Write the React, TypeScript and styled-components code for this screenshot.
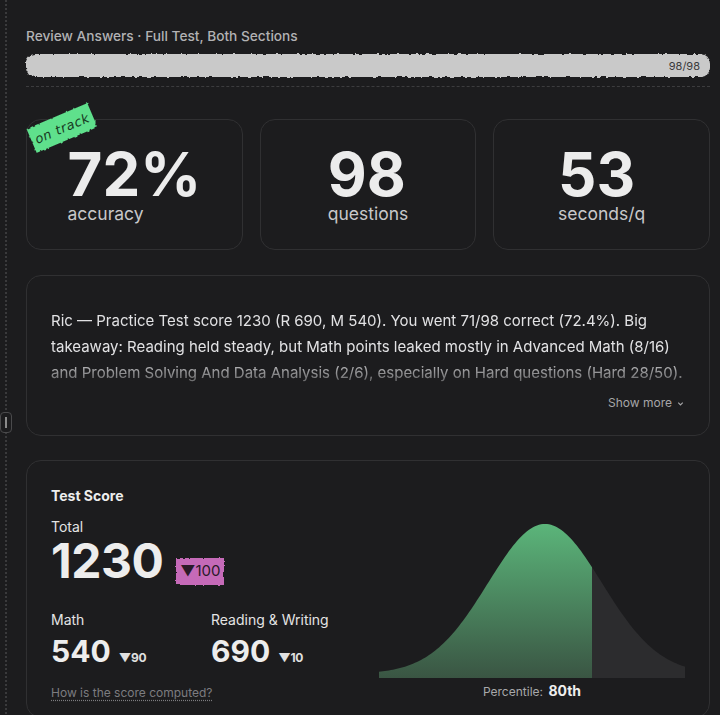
import React, { useMemo } from "react";
import styled, { createGlobalStyle } from "styled-components";

const GlobalStyle = createGlobalStyle`
  html, body {
    margin: 0;
    padding: 0;
    background: #1c1c1e;
    font-family: Inter, "Noto Sans", sans-serif;
    color: #e6e6e6;
  }
`;

const Page = styled.div`
  display: flex;
  min-height: 715px;
  overflow: hidden;
`;

const Rail = styled.div`
  position: relative;
  width: 13px;
  flex-shrink: 0;
  &::before {
    content: "";
    position: absolute;
    top: 0;
    bottom: 0;
    left: 5px;
    border-left: 2px dotted #3a3a3c;
  }
`;

const Handle = styled.div`
  position: absolute;
  left: 0;
  top: 412px;
  width: 10px;
  height: 19px;
  border: 1px solid #4a4a4c;
  border-radius: 4px;
  background: #1c1c1e;
  display: flex;
  align-items: center;
  justify-content: center;
  &::after {
    content: "";
    width: 2px;
    height: 11px;
    background: #8a8a8a;
  }
`;

const Main = styled.main`
  flex: 1;
  padding: 27px 10px 0 13px;
  display: flex;
  flex-direction: column;
`;

const Heading = styled.div`
  font-size: 13.7px;
  line-height: 18px;
  font-weight: 500;
  color: #b2b2b4;
`;

const Progress = styled.div`
  position: relative;
  margin-top: 9px;
  height: 23px;
  display: flex;
  align-items: center;
  justify-content: flex-end;
  padding-right: 10px;
  &::before {
    content: "";
    position: absolute;
    inset: 0;
    background: #c9c9c9;
    border-radius: 9px;
    filter: url(#rough);
  }
`;

const ProgressText = styled.span`
  position: relative;
  font-size: 11px;
  color: #3a3a3c;
`;

const Divider = styled.hr`
  margin: 9px 0 0;
  border: 0;
  border-top: 1px dashed #3c3c3e;
`;

const Stats = styled.div`
  margin-top: 32px;
  display: grid;
  grid-template-columns: repeat(3, 1fr);
  gap: 17px;
`;

const Card = styled.section`
  position: relative;
  border: 1px solid #303032;
  border-radius: 15px;
  background: #1c1c1e;
`;

const StatCard = styled(Card)`
  height: 129px;
  display: flex;
  align-items: center;
  justify-content: center;
`;

const StatBlock = styled.div`
  display: flex;
  flex-direction: column;
  align-items: flex-start;
  padding-bottom: 1px;
`;

const StatValue = styled.div`
  font-size: 60px;
  line-height: 60px;
  font-weight: 700;
  color: #ececec;
`;

const StatLabel = styled.div`
  font-size: 17.5px;
  line-height: 20px;
  color: #c8c8ca;
`;

const Sticker = styled.div`
  position: absolute;
  left: 2px;
  top: -5px;
  width: 66px;
  height: 26px;
  display: flex;
  align-items: center;
  justify-content: center;
  transform: rotate(-23deg);
  &::before {
    content: "";
    position: absolute;
    inset: 0;
    background: #5fe08c;
    filter: url(#rough);
  }
`;

const StickerText = styled.span`
  position: relative;
  font-family: "DejaVu Sans", sans-serif;
  font-style: oblique;
  font-size: 13px;
  letter-spacing: 0.6px;
  color: #183a23;
`;

const SummaryCard = styled(Card)`
  margin-top: 25px;
  padding: 32px 24px 24px 24px;
  display: flex;
  flex-direction: column;
`;

const SummaryText = styled.p`
  margin: 0;
  font-size: 15px;
  line-height: 26px;
  color: #e2e2e4;
  -webkit-mask-image: linear-gradient(to bottom, #000 62%, rgba(0, 0, 0, 0.42) 92%);
  mask-image: linear-gradient(to bottom, #000 62%, rgba(0, 0, 0, 0.42) 92%);
`;

const ShowMore = styled.button`
  align-self: flex-end;
  margin-top: 9px;
  background: none;
  border: 0;
  padding: 0;
  font-family: inherit;
  font-size: 12px;
  line-height: 16px;
  color: #a6a6a8;
  display: flex;
  align-items: center;
  gap: 4px;
`;

const ScoreCard = styled(Card)`
  margin-top: 24px;
  padding: 27px 24px 16px 24px;
`;

const CardTitle = styled.h3`
  margin: 0;
  font-size: 14px;
  line-height: 16px;
  font-weight: 700;
  color: #ededed;
`;

const ScoreGrid = styled.div`
  display: grid;
  grid-template-columns: 1fr 306px;
  align-items: end;
`;

const ScoreLeft = styled.div`
  display: flex;
  flex-direction: column;
`;

const SmallLabel = styled.div`
  font-size: 14px;
  line-height: 16px;
  color: #e4e4e4;
`;

const TotalLabel = styled(SmallLabel)`
  margin-top: 15px;
`;

const TotalRow = styled.div`
  display: flex;
  align-items: flex-end;
  gap: 13px;
  margin-top: 2px;
`;

const TotalValue = styled.div`
  font-size: 48px;
  line-height: 48px;
  font-weight: 700;
  letter-spacing: -0.5px;
  color: #ededed;
`;

const DeltaBadge = styled.span`
  position: relative;
  padding: 3px 4px 4px 4px;
  font-size: 15px;
  line-height: 20px;
  color: #2a1a28;
  display: inline-flex;
  align-items: center;
  &::before {
    content: "";
    position: absolute;
    inset: 0;
    background: #c56ab8;
    filter: url(#rough);
  }
  span {
    position: relative;
  }
`;

const Sections = styled.div`
  display: flex;
  margin-top: 27px;
`;

const Section = styled.div<{ $width?: number }>`
  width: ${(p) => (p.$width ? `${p.$width}px` : "auto")};
  display: flex;
  flex-direction: column;
`;

const SectionValueRow = styled.div`
  display: flex;
  align-items: baseline;
  gap: 8px;
  margin-top: 6px;
`;

const SectionValue = styled.div`
  font-size: 30px;
  line-height: 34px;
  font-weight: 700;
  color: #ededed;
`;

const SectionDelta = styled.span`
  font-size: 12px;
  font-weight: 700;
  color: #e0e0e0;
  letter-spacing: -0.3px;
`;

const HowLink = styled.a`
  margin-top: 17px;
  align-self: flex-start;
  font-size: 12px;
  line-height: 16px;
  color: #7c7c80;
  text-decoration: underline dotted #7c7c80;
  text-underline-offset: 3px;
`;

const ChartWrap = styled.div`
  display: flex;
  flex-direction: column;
  align-items: center;
`;

const ChartSvg = styled.svg`
  display: block;
`;

const Percentile = styled.div`
  margin-top: 4px;
  font-size: 12px;
  line-height: 18px;
  color: #a8a8aa;
  b {
    font-size: 14px;
    font-weight: 700;
    color: #eeeeee;
    margin-left: 2px;
  }
`;

const W = 306;
const H = 157;
const CENTER = 166;
const SIGMA = 57;
const CUT = 213;

const curveY = (x: number) => H - (4 + 150 * Math.exp(-((x - CENTER) ** 2) / (2 * SIGMA * SIGMA)));

const areaPath = (from: number, to: number) => {
  let d = `M ${from} ${H} L ${from} ${curveY(from).toFixed(2)}`;
  for (let x = from; x <= to; x += 2) d += ` L ${x} ${curveY(x).toFixed(2)}`;
  d += ` L ${to} ${curveY(to).toFixed(2)} L ${to} ${H} Z`;
  return d;
};

const BellCurve: React.FC = () => {
  const [green, gray] = useMemo(() => [areaPath(0, CUT), areaPath(CUT, W)], []);
  return (
    <ChartSvg width={W} height={H} viewBox={`0 0 ${W} ${H}`}>
      <defs>
        <linearGradient id="bellGreen" x1="0" y1="0" x2="0" y2="1">
          <stop offset="0%" stopColor="#5bb57a" />
          <stop offset="100%" stopColor="#3a5543" />
        </linearGradient>
      </defs>
      <path d={gray} fill="#2c2c2e" />
      <path d={green} fill="url(#bellGreen)" />
    </ChartSvg>
  );
};

const Chevron = () => (
  <svg width="9" height="9" viewBox="0 0 10 10" fill="none" stroke="#a6a6a8" strokeWidth="1.3">
    <path d="M2.5 4 L5 6.5 L7.5 4" />
  </svg>
);

const App: React.FC = () => {
  return (
    <>
      <GlobalStyle />
      <svg width="0" height="0" style={{ position: "absolute" }}>
        <filter id="rough" x="-5%" y="-25%" width="110%" height="150%">
          <feTurbulence type="fractalNoise" baseFrequency="0.28" numOctaves="2" seed="3" />
          <feDisplacementMap in="SourceGraphic" scale="3.5" xChannelSelector="R" yChannelSelector="G" />
        </filter>
      </svg>
      <Page>
        <Rail>
          <Handle />
        </Rail>
        <Main>
          <Heading>Review Answers · Full Test, Both Sections</Heading>
          <Progress>
            <ProgressText>98/98</ProgressText>
          </Progress>
          <Divider />

          <Stats>
            <StatCard>
              <Sticker>
                <StickerText>on track</StickerText>
              </Sticker>
              <StatBlock>
                <StatValue>72%</StatValue>
                <StatLabel>accuracy</StatLabel>
              </StatBlock>
            </StatCard>
            <StatCard>
              <StatBlock>
                <StatValue>98</StatValue>
                <StatLabel>questions</StatLabel>
              </StatBlock>
            </StatCard>
            <StatCard>
              <StatBlock>
                <StatValue>53</StatValue>
                <StatLabel>seconds/q</StatLabel>
              </StatBlock>
            </StatCard>
          </Stats>

          <SummaryCard>
            <SummaryText>
              Ric — Practice Test score 1230 (R 690, M 540). You went 71/98 correct (72.4%). Big
              takeaway: Reading held steady, but Math points leaked mostly in Advanced Math (8/16)
              and Problem Solving And Data Analysis (2/6), especially on Hard questions (Hard 28/50).
            </SummaryText>
            <ShowMore>
              Show more <Chevron />
            </ShowMore>
          </SummaryCard>

          <ScoreCard>
            <CardTitle>Test Score</CardTitle>
            <ScoreGrid>
              <ScoreLeft>
                <TotalLabel>Total</TotalLabel>
                <TotalRow>
                  <TotalValue>1230</TotalValue>
                  <DeltaBadge>
                    <span>▼100</span>
                  </DeltaBadge>
                </TotalRow>
                <Sections>
                  <Section $width={160}>
                    <SmallLabel>Math</SmallLabel>
                    <SectionValueRow>
                      <SectionValue>540</SectionValue>
                      <SectionDelta>▼90</SectionDelta>
                    </SectionValueRow>
                  </Section>
                  <Section>
                    <SmallLabel>Reading &amp; Writing</SmallLabel>
                    <SectionValueRow>
                      <SectionValue>690</SectionValue>
                      <SectionDelta>▼10</SectionDelta>
                    </SectionValueRow>
                  </Section>
                </Sections>
                <HowLink>How is the score computed?</HowLink>
              </ScoreLeft>
              <ChartWrap>
                <BellCurve />
                <Percentile>
                  Percentile: <b>80th</b>
                </Percentile>
              </ChartWrap>
            </ScoreGrid>
          </ScoreCard>
        </Main>
      </Page>
    </>
  );
};

export default App;
